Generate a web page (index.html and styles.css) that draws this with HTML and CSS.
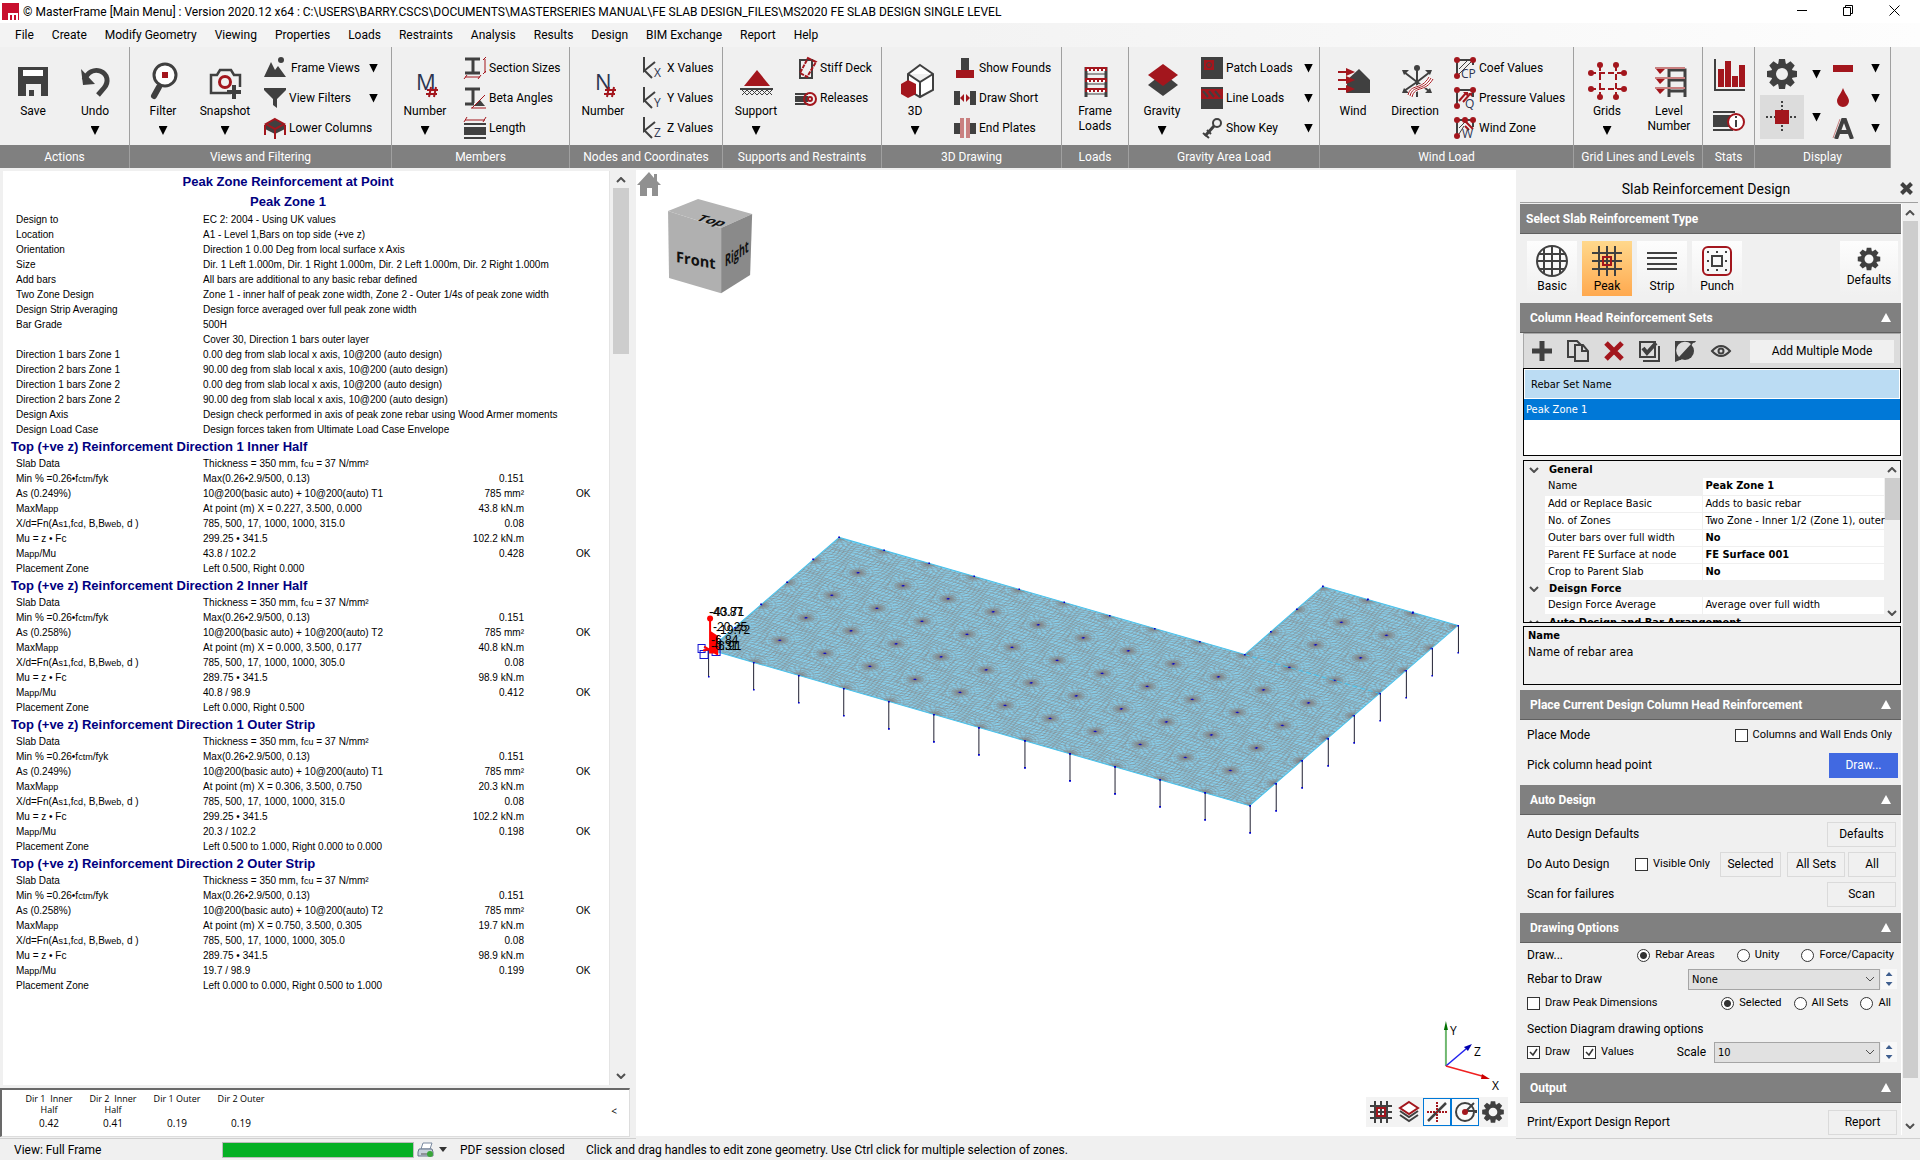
FILE: index.html
```
<!DOCTYPE html>
<html lang="en">
<head>
<meta charset="utf-8">
<title>MasterFrame [Main Menu]</title>
<link rel="stylesheet" href="styles.css">
</head>
<body>
<header class="titlebar">
  <svg class="logo" width="17" height="17" viewBox="0 0 17 17"><path fill="#c8102e" d="M0 0h17v17H0z"/><path fill="none" stroke="#fff" stroke-width="2" d="M7 17v-6h8v6M11 11v6"/></svg>
  <h1 class="title">© MasterFrame [Main Menu] : Version 2020.12 x64 : C:\USERS\BARRY.CSCS\DOCUMENTS\MASTERSERIES MANUAL\FE SLAB DESIGN_FILES\MS2020 FE SLAB DESIGN SINGLE LEVEL</h1>
  <div class="winbtns">
    <button aria-label="Minimize"><svg width="11" height="11"><path d="M0 5.500h10" stroke="#000"/></svg></button>
    <button aria-label="Restore"><svg width="11" height="11" fill="none" stroke="#000"><path d="M.5 2.500h7v8h-7zM2.500 2.500v-2h7v8h-2"/></svg></button>
    <button aria-label="Close"><svg width="11" height="11" stroke="#000"><path d="M.5.5l10 10M10.500.5l-10 10"/></svg></button>
  </div>
</header>
<nav class="menu">
  <button>File</button><button>Create</button><button>Modify Geometry</button><button>Viewing</button><button>Properties</button><button>Loads</button><button>Restraints</button><button>Analysis</button><button>Results</button><button>Design</button><button>BIM Exchange</button><button>Report</button><button>Help</button>
</nav>
<div class="ribbon">
  <section class="group">
    <div class="tools">
      <button class="big"><svg viewBox="0 0 40 36"><path fill="#404040" d="M5 4h30v29h-7V21H13v12H5z"/><path fill="#fff" d="M10 7h20v6H10z"/><path fill="#404040" d="M16 27h5v6h-5z"/></svg><span>Save</span></button>
      <button class="big"><svg viewBox="0 0 40 36"><path fill="none" stroke="#404040" stroke-width="5" d="M9 17c4-8 10-11 16-9 8 3 9 11 4 17l-6 7"/><path fill="#404040" d="M6 6l2 16 12-1z"/></svg><span>Undo</span><i class="tri"></i></button>
    </div>
    <h2>Actions</h2>
  </section>
  <section class="group">
    <div class="tools">
      <button class="big"><svg viewBox="0 0 40 36"><circle cx="22" cy="12" r="11" fill="#fff" stroke="#404040" stroke-width="3"/><path stroke="#404040" stroke-width="6" stroke-linecap="round" d="M16 24l-5 9"/><path fill="#a3161d" d="M19 9h6v6h-6z"/></svg><span>Filter</span><i class="tri"></i></button>
      <button class="big"><svg viewBox="0 0 40 36"><path fill="none" stroke="#404040" stroke-width="2.500" d="M26 30H6V12h6l3-5h11l3 5h6v12"/><circle cx="20" cy="19" r="5.500" fill="none" stroke="#a3161d" stroke-width="3"/><path fill="#404040" d="M27 22h4v5h5v4h-5v5h-4v-5h-5v-4h5z"/></svg><span>Snapshot</span><i class="tri"></i></button>
      <div class="smalls views">
        <button><svg viewBox="0 0 22 22"><path fill="#404040" d="M0 20L7 5l4 8 3-4 8 11z"/><circle cx="17" cy="3" r="3" fill="#404040"/></svg>Frame Views<i class="tri"></i></button>
        <button><svg viewBox="0 0 22 22"><path fill="#404040" d="M0 1h22v2l-9 9v9l-4-3v-6L0 3z"/></svg>View Filters<i class="tri"></i></button>
        <button><svg viewBox="0 0 22 22"><path fill="#404040" d="M1 7v5l10 5 10-5V7z"/><path fill="#404040" stroke="#a3161d" stroke-width="2" d="M11 2l9 5-9 5-9-5zM1 8v10M11 13v9M21 8v10"/></svg>Lower Columns</button>
      </div>
    </div>
    <h2>Views and Filtering</h2>
  </section>
  <section class="group">
    <div class="tools">
      <button class="big"><svg viewBox="0 0 40 36"><text class="glyph" x="11" y="27">M</text><path stroke="#a3161d" stroke-width="2" d="M26 24l-2 10M31 24l-2 10M22 27h11M21 31h11"/></svg><span>Number</span><i class="tri"></i></button>
      <div class="smalls">
        <button><svg viewBox="0 0 22 22"><path fill="none" stroke="#404040" stroke-width="3" d="M1 2h15M1 16h15M9 2v14"/><path fill="none" stroke="#a3161d" d="M21 2v14M19 3l3-3M19 17l3-3M1 20h15M0 22l3-4M14 22l3-4"/></svg>Section Sizes</button>
        <button><svg viewBox="0 0 22 22"><path fill="none" stroke="#404040" stroke-width="3" d="M1 2h15M1 17h9M9 2v14"/><path fill="#404040" d="M10 19h11l-5-6z"/><path fill="none" stroke="#a3161d" d="M7 21h15M8 21L21 8"/></svg>Beta Angles</button>
        <button><svg viewBox="0 0 22 22"><path fill="none" stroke="#a3161d" d="M1 3h20M0 5l3-5M19 5l3-5"/><path fill="#404040" d="M0 6h22v2H0zm0 4h22v8H0zm0 10h22v2H0z"/></svg>Length</button>
      </div>
    </div>
    <h2>Members</h2>
  </section>
  <section class="group">
    <div class="tools">
      <button class="big"><svg viewBox="0 0 40 36"><text class="glyph" x="12" y="27">N</text><path stroke="#a3161d" stroke-width="2" d="M26 24l-2 10M31 24l-2 10M22 27h11M21 31h11"/></svg><span>Number</span></button>
      <div class="smalls">
        <button><svg viewBox="0 0 22 22"><path fill="none" stroke="#404040" stroke-width="2" d="M2 0v14L13 5M2 13l8 8"/><text class="axis" x="12" y="20">X</text></svg>X Values</button>
        <button><svg viewBox="0 0 22 22"><path fill="none" stroke="#404040" stroke-width="2" d="M2 0v14L13 5M2 13l8 8"/><text class="axis" x="12" y="20">Y</text></svg>Y Values</button>
        <button><svg viewBox="0 0 22 22"><path fill="none" stroke="#404040" stroke-width="2" d="M2 0v14L13 5M2 13l8 8"/><text class="axis" x="12" y="20">Z</text></svg>Z Values</button>
      </div>
    </div>
    <h2>Nodes and Coordinates</h2>
  </section>
  <section class="group">
    <div class="tools">
      <button class="big"><svg viewBox="0 0 40 36"><path fill="#a3161d" d="M21 7l13 16H8z"/><path fill="none" stroke="#404040" stroke-width="2" d="M4 26h33"/><path fill="none" stroke="#404040" d="M6 27l5 5 5-5 5 5 5-5 5 5 5-5M6 32l5-5 5 5 5-5 5 5 5-5 5 5"/></svg><span>Support</span><i class="tri"></i></button>
      <div class="smalls">
        <button><svg viewBox="0 0 22 22"><path fill="none" stroke="#404040" stroke-width="2" d="M5 3h12v18H5z"/><path fill="none" stroke="#a3161d" stroke-width="2" stroke-dasharray="4 1" d="M13 1l8 4-9 15-7-4z"/></svg>Stiff Deck</button>
        <button><svg viewBox="0 0 22 22"><path fill="#404040" d="M0 6h13v2H0zm0 3h13v6H0zm0 7h13v2H0z"/><circle cx="15" cy="12" r="6" fill="none" stroke="#a3161d" stroke-width="2"/><circle cx="15" cy="12" r="2" fill="none" stroke="#a3161d" stroke-width="2"/></svg>Releases</button>
      </div>
    </div>
    <h2>Supports and Restraints</h2>
  </section>
  <section class="group">
    <div class="tools">
      <button class="big"><svg viewBox="0 0 40 36"><path fill="#fff" stroke="#404040" stroke-width="2" d="M25 2l13 9v16l-13 7-12-7V11zM13 11l12 8 13-8M25 19v15"/><path fill="#a3161d" d="M13 17l8 4v10l-8 4-7-4V21z"/></svg><span>3D</span><i class="tri"></i></button>
      <div class="smalls">
        <button><svg viewBox="0 0 22 22"><path fill="#404040" d="M7 1h8v13H7z"/><path fill="#a3161d" d="M2 13h18v8H2z"/></svg>Show Founds</button>
        <button><svg viewBox="0 0 22 22"><path fill="#404040" d="M0 4h6v14H0zm16 0h6v14h-6z"/><path fill="#a3161d" d="M10 7v8l-4-4zM12 7v8l4-4z"/></svg>Draw Short</button>
        <button><svg viewBox="0 0 22 22"><path fill="#404040" d="M0 6h6v11H0zm16 0h6v11h-6z"/><path fill="#c98080" d="M6 1h4v20H6zm6 0h4v20h-4z"/></svg>End Plates</button>
      </div>
    </div>
    <h2>3D Drawing</h2>
  </section>
  <section class="group">
    <div class="tools">
      <button class="big"><svg viewBox="0 0 40 36"><path fill="none" stroke="#404040" stroke-width="3" d="M11 4v30M31 4v30"/><path stroke="#404040" d="M10 11h22M10 21h22M10 31h22"/><path stroke="#a3161d" stroke-width="4" d="M10 6h22M10 17h22M10 27h22"/><path stroke="#fff" stroke-width="2" stroke-dasharray="2 2" d="M12 7h18M12 18h18M12 28h18"/></svg><span>Frame<br>Loads</span></button>
    </div>
    <h2>Loads</h2>
  </section>
  <section class="group">
    <div class="tools">
      <button class="big"><svg viewBox="0 0 40 36"><path fill="#404040" d="M21 10l15 12-15 11L6 22z"/><path fill="#a3161d" d="M21 1l15 11-15 11L6 12z"/></svg><span>Gravity</span><i class="tri"></i></button>
      <div class="smalls loads">
        <button><svg viewBox="0 0 22 22"><path fill="#404040" d="M0 0h22v22H0z"/><path fill="#a3161d" d="M3 3h10v10H3z"/><circle cx="8" cy="8" r="2.500" fill="none" stroke="#404040"/></svg>Patch Loads<i class="tri"></i></button>
        <button><svg viewBox="0 0 22 22"><path fill="#404040" d="M0 0h22v22H0z"/><path fill="#a3161d" d="M0 2h22v10H0z"/><path stroke="#404040" stroke-width="2" d="M2 4l5 6M8 4l5 6M14 4l5 6"/></svg>Line Loads<i class="tri"></i></button>
        <button><svg viewBox="0 0 22 22"><circle cx="16" cy="6" r="4" fill="none" stroke="#404040" stroke-width="2"/><path stroke="#404040" stroke-width="3" d="M13 9L4 19"/><path stroke="#404040" stroke-width="2" d="M2 16l6 5M6 13l4 4"/></svg>Show Key<i class="tri"></i></button>
      </div>
    </div>
    <h2>Gravity Area Load</h2>
  </section>
  <section class="group">
    <div class="tools">
      <button class="big"><svg viewBox="0 0 40 36"><path fill="#404040" d="M14 17L26 6l11 11v13H14z"/><path stroke="#a3161d" stroke-width="2" d="M5 9h9M5 17h9M5 26h9"/><path fill="#a3161d" d="M13 5l9 4-9 4zM13 13l9 4-9 4zM13 22l9 4-9 4z"/></svg><span>Wind</span></button>
      <button class="big"><svg viewBox="0 0 40 36"><path stroke="#404040" stroke-width="2" d="M22 5v29M22 19L9 9M22 19L35 9M22 19L9 28M22 19l12 9"/><circle cx="22" cy="5" r="3" fill="#404040"/><path fill="#404040" d="M7 7h7l-5 5zM37 7h-7l5 5zM7 30h7l-5-5zM37 30h-7l5-5z"/><path fill="none" stroke="#fff" stroke-width="6" d="M15 33c3-12 13-4 21-18"/><path fill="none" stroke="#a3161d" d="M13 32c3-12 13-4 21-18M15 33c3-12 13-4 21-18M17 34c3-12 13-4 21-18"/></svg><span>Direction</span><i class="tri"></i></button>
      <div class="smalls">
        <button><svg viewBox="0 0 22 22"><path fill="none" stroke="#404040" stroke-width="2" d="M3 19V3h16v5"/><path stroke="#404040" d="M5 12l8-8M5 17L17 5"/><g fill="#a3161d"><circle cx="3" cy="3" r="3"/><circle cx="19" cy="3" r="3"/><circle cx="3" cy="19" r="3"/></g><text class="axis" x="7" y="21">CP</text></svg>Coef Values</button>
        <button><svg viewBox="0 0 22 22"><path fill="none" stroke="#404040" stroke-width="2" d="M3 19V3h16v7"/><path stroke="#a3161d" stroke-width="2" d="M5 14l7-8M9 15l7-8"/><g fill="#a3161d"><path d="M9 5h5v5zM14 6h4v4z"/><circle cx="3" cy="3" r="3"/><circle cx="19" cy="3" r="3"/><circle cx="3" cy="19" r="3"/></g><text class="axis" x="11" y="21">Q</text></svg>Pressure Values</button>
        <button><svg viewBox="0 0 22 22"><path fill="none" stroke="#404040" stroke-width="2" d="M3 19V3h16v7"/><path stroke="#404040" d="M5 11l7-7M5 17L10 9"/><path stroke="#a3161d" stroke-width="2" d="M11 4l8 8M11 9l4 4"/><g fill="#a3161d"><circle cx="3" cy="3" r="3"/><circle cx="11" cy="3" r="3"/><circle cx="19" cy="3" r="3"/><circle cx="3" cy="19" r="3"/></g><text class="axis" x="8" y="21">W</text></svg>Wind Zone</button>
      </div>
    </div>
    <h2>Wind Load</h2>
  </section>
  <section class="group">
    <div class="tools">
      <button class="big"><svg viewBox="0 0 40 36"><path fill="none" stroke="#a3161d" stroke-width="2" stroke-dasharray="6 3" d="M13 2v32M29 2v32M3 10h36M3 26h36"/><g fill="#a3161d"><circle cx="13" cy="2" r="3"/><circle cx="29" cy="2" r="3"/><circle cx="13" cy="34" r="3"/><circle cx="29" cy="34" r="3"/><circle cx="4" cy="10" r="3"/><circle cx="4" cy="26" r="3"/><circle cx="37" cy="10" r="3"/><circle cx="37" cy="26" r="3"/></g></svg><span>Grids</span><i class="tri"></i></button>
      <button class="big"><svg viewBox="0 0 40 36"><path fill="none" stroke="#404040" stroke-width="3" d="M20 34V7h16v27M20 17h16M20 28h16"/><path stroke="#c98080" stroke-width="2" d="M6 5h30M6 15h30M6 25h30"/><path fill="#a3161d" d="M7 6h9l-5 5zM7 16h9l-5 5zM7 26h9l-5 5z"/></svg><span>Level<br>Number</span></button>
    </div>
    <h2>Grid Lines and Levels</h2>
  </section>
  <section class="group">
    <div class="tools stats">
      <button aria-label="Statistics"><svg width="32" height="32" viewBox="0 0 32 32"><path fill="none" stroke="#404040" stroke-width="2" d="M2 0v31h30"/><path fill="#a3161d" d="M5 10h6v18H5zM12 2h6v26h-6zM19 17h6v11h-6zM26 6h6v22h-6z"/></svg></button>
      <button aria-label="Member info"><svg width="32" height="22" viewBox="0 0 32 22"><path fill="#404040" d="M0 1h22v2H0zm0 4h20v12H0zm0 14h20v2H0z"/><circle cx="23" cy="12" r="8" fill="#fff" stroke="#a3161d" stroke-width="2"/><path stroke="#404040" stroke-width="2" d="M23 6v2M23 10v7"/></svg></button>
    </div>
    <h2>Stats</h2>
  </section>
  <section class="group">
    <div class="tools display">
      <div class="pair">
        <button aria-label="Settings"><svg width="32" height="32" viewBox="-16 -16 32 32"><use href="#gear"/></svg></button><i class="tri"></i>
        <button class="cross" aria-label="Cursor"><svg width="36" height="36" viewBox="0 0 36 36"><path stroke="#404040" stroke-width="2" stroke-dasharray="2 2" d="M18 2v32M2 18h32"/><path fill="#a3161d" d="M11 11h14v14H11z"/></svg></button><i class="tri"></i>
      </div>
      <div class="trio">
        <button aria-label="Line colour"><svg width="22" height="22" viewBox="0 0 22 22"><path fill="#a3161d" d="M1 8h20v7H1z"/></svg><i class="tri"></i></button>
        <button aria-label="Fill colour"><svg width="22" height="22" viewBox="0 0 22 22"><path fill="#a3161d" d="M11 1c2 6 6 9 6 13a6 6 0 0 1-12 0c0-4 4-7 6-13z"/></svg><i class="tri"></i></button>
        <button aria-label="Font"><svg width="22" height="22" viewBox="0 0 22 22"><path fill="none" stroke="#404040" stroke-width="4" d="M4 22L11 3h2l7 19M7 15h11"/><path stroke="#c98080" d="M1 21L8 2"/></svg><i class="tri"></i></button>
      </div>
    </div>
    <h2>Display</h2>
  </section>
</div>

<main class="main">
  <div class="left">
    <div class="reportbox">
      <article class="report">
        <h3 class="head">Peak Zone Reinforcement at Point</h3>
        <h3 class="head">Peak Zone 1</h3>
        <table>
          <colgroup><col class="c-name"><col><col class="c-num"><col class="c-ok"></colgroup>
          <tr><td>Design to</td><td colspan="3">EC 2: 2004 - Using UK values</td></tr>
          <tr><td>Location</td><td colspan="3">A1 - Level 1,Bars on top side (+ve z)</td></tr>
          <tr><td>Orientation</td><td colspan="3">Direction 1 0.00 Deg from local surface x Axis</td></tr>
          <tr><td>Size</td><td colspan="3">Dir. 1 Left 1.000m, Dir. 1 Right 1.000m, Dir. 2 Left 1.000m, Dir. 2 Right 1.000m</td></tr>
          <tr><td>Add bars</td><td colspan="3">All bars are additional to any basic rebar defined</td></tr>
          <tr><td>Two Zone Design</td><td colspan="3">Zone 1 - inner half of peak zone width, Zone 2 - Outer 1/4s of peak zone width</td></tr>
          <tr><td>Design Strip Averaging</td><td colspan="3">Design force averaged over full peak zone width</td></tr>
          <tr><td>Bar Grade</td><td colspan="3">500H</td></tr>
          <tr><td></td><td colspan="3">Cover 30, Direction 1 bars outer layer</td></tr>
          <tr><td>Direction 1 bars Zone 1</td><td colspan="3">0.00 deg from slab local x axis, 10@200 (auto design)</td></tr>
          <tr><td>Direction 2 bars Zone 1</td><td colspan="3">90.00 deg from slab local x axis, 10@200 (auto design)</td></tr>
          <tr><td>Direction 1 bars Zone 2</td><td colspan="3">0.00 deg from slab local x axis, 10@200 (auto design)</td></tr>
          <tr><td>Direction 2 bars Zone 2</td><td colspan="3">90.00 deg from slab local x axis, 10@200 (auto design)</td></tr>
          <tr><td>Design Axis</td><td colspan="3">Design check performed in axis of peak zone rebar using Wood Armer moments</td></tr>
          <tr><td>Design Load Case</td><td colspan="3">Design forces taken from Ultimate Load Case Envelope</td></tr>
          <tr class="sec"><th colspan="4">Top (+ve z) Reinforcement Direction 1 Inner Half</th></tr>
          <tr><td>Slab Data</td><td>Thickness = 350 mm, f<small>cu</small> = 37 N/mm²</td><td></td><td></td></tr>
          <tr><td>Min % =0.26•f<small>ctm</small>/fyk</td><td>Max(0.26•2.9/500, 0.13)</td><td>0.151</td><td></td></tr>
          <tr><td>As (0.249%)</td><td>10@200(basic auto) + 10@200(auto) T1</td><td>785 mm²</td><td>OK</td></tr>
          <tr><td>MaxM<small>app</small></td><td>At point (m) X = 0.227, 3.500, 0.000</td><td>43.8 kN.m</td><td></td></tr>
          <tr><td>X/d=Fn(A<small>s1</small>,f<small>cd</small>, B,B<small>web</small>, d )</td><td>785, 500, 17, 1000, 1000, 315.0</td><td>0.08</td><td></td></tr>
          <tr><td>Mu = z • Fc</td><td>299.25 • 341.5</td><td>102.2 kN.m</td><td></td></tr>
          <tr><td>M<small>app</small>/Mu</td><td>43.8 / 102.2</td><td>0.428</td><td>OK</td></tr>
          <tr><td>Placement Zone</td><td>Left 0.500, Right 0.000</td><td></td><td></td></tr>
          <tr class="sec"><th colspan="4">Top (+ve z) Reinforcement Direction 2 Inner Half</th></tr>
          <tr><td>Slab Data</td><td>Thickness = 350 mm, f<small>cu</small> = 37 N/mm²</td><td></td><td></td></tr>
          <tr><td>Min % =0.26•f<small>ctm</small>/fyk</td><td>Max(0.26•2.9/500, 0.13)</td><td>0.151</td><td></td></tr>
          <tr><td>As (0.258%)</td><td>10@200(basic auto) + 10@200(auto) T2</td><td>785 mm²</td><td>OK</td></tr>
          <tr><td>MaxM<small>app</small></td><td>At point (m) X = 0.000, 3.500, 0.177</td><td>40.8 kN.m</td><td></td></tr>
          <tr><td>X/d=Fn(A<small>s1</small>,f<small>cd</small>, B,B<small>web</small>, d )</td><td>785, 500, 17, 1000, 1000, 305.0</td><td>0.08</td><td></td></tr>
          <tr><td>Mu = z • Fc</td><td>289.75 • 341.5</td><td>98.9 kN.m</td><td></td></tr>
          <tr><td>M<small>app</small>/Mu</td><td>40.8 / 98.9</td><td>0.412</td><td>OK</td></tr>
          <tr><td>Placement Zone</td><td>Left 0.000, Right 0.500</td><td></td><td></td></tr>
          <tr class="sec"><th colspan="4">Top (+ve z) Reinforcement Direction 1 Outer Strip</th></tr>
          <tr><td>Slab Data</td><td>Thickness = 350 mm, f<small>cu</small> = 37 N/mm²</td><td></td><td></td></tr>
          <tr><td>Min % =0.26•f<small>ctm</small>/fyk</td><td>Max(0.26•2.9/500, 0.13)</td><td>0.151</td><td></td></tr>
          <tr><td>As (0.249%)</td><td>10@200(basic auto) + 10@200(auto) T1</td><td>785 mm²</td><td>OK</td></tr>
          <tr><td>MaxM<small>app</small></td><td>At point (m) X = 0.306, 3.500, 0.750</td><td>20.3 kN.m</td><td></td></tr>
          <tr><td>X/d=Fn(A<small>s1</small>,f<small>cd</small>, B,B<small>web</small>, d )</td><td>785, 500, 17, 1000, 1000, 315.0</td><td>0.08</td><td></td></tr>
          <tr><td>Mu = z • Fc</td><td>299.25 • 341.5</td><td>102.2 kN.m</td><td></td></tr>
          <tr><td>M<small>app</small>/Mu</td><td>20.3 / 102.2</td><td>0.198</td><td>OK</td></tr>
          <tr><td>Placement Zone</td><td>Left 0.500 to 1.000, Right 0.000 to 0.000</td><td></td><td></td></tr>
          <tr class="sec"><th colspan="4">Top (+ve z) Reinforcement Direction 2 Outer Strip</th></tr>
          <tr><td>Slab Data</td><td>Thickness = 350 mm, f<small>cu</small> = 37 N/mm²</td><td></td><td></td></tr>
          <tr><td>Min % =0.26•f<small>ctm</small>/fyk</td><td>Max(0.26•2.9/500, 0.13)</td><td>0.151</td><td></td></tr>
          <tr><td>As (0.258%)</td><td>10@200(basic auto) + 10@200(auto) T2</td><td>785 mm²</td><td>OK</td></tr>
          <tr><td>MaxM<small>app</small></td><td>At point (m) X = 0.750, 3.500, 0.305</td><td>19.7 kN.m</td><td></td></tr>
          <tr><td>X/d=Fn(A<small>s1</small>,f<small>cd</small>, B,B<small>web</small>, d )</td><td>785, 500, 17, 1000, 1000, 305.0</td><td>0.08</td><td></td></tr>
          <tr><td>Mu = z • Fc</td><td>289.75 • 341.5</td><td>98.9 kN.m</td><td></td></tr>
          <tr><td>M<small>app</small>/Mu</td><td>19.7 / 98.9</td><td>0.199</td><td>OK</td></tr>
          <tr><td>Placement Zone</td><td>Left 0.000 to 0.000, Right 0.500 to 1.000</td><td></td><td></td></tr>
        </table>
      </article>
      <div class="scroll">
        <svg class="chev" viewBox="0 0 10 6"><path d="M1 5l4-4 4 4"/></svg>
        <div class="thumb short"></div>
        <svg class="chev" viewBox="0 0 10 6"><path d="M1 1l4 4 4-4"/></svg>
      </div>
    </div>
    <div class="summary">
      <table>
        <tr><th>Dir 1&nbsp; Inner Half</th><th>Dir 2&nbsp; Inner Half</th><th>Dir 1 Outer</th><th>Dir 2 Outer</th></tr>
        <tr><td>0.42</td><td>0.41</td><td>0.19</td><td>0.19</td></tr>
      </table>
      <button>&lt;</button>
    </div>
  </div>

  <div class="view">
    <svg class="scene" viewBox="637 170 879 965">
      <defs>
        <g id="gear"><circle r="8.500" fill="none" stroke="#404040" stroke-width="5"/><g fill="#404040"><path id="tooth" d="M-3-15h6l1 6h-8z"/><use href="#tooth" transform="rotate(45)"/><use href="#tooth" transform="rotate(90)"/><use href="#tooth" transform="rotate(135)"/><use href="#tooth" transform="rotate(180)"/><use href="#tooth" transform="rotate(225)"/><use href="#tooth" transform="rotate(270)"/><use href="#tooth" transform="rotate(315)"/></g></g>
        <radialGradient id="shade"><stop offset="0" stop-color="#666" stop-opacity=".95"/><stop offset=".3" stop-color="#777" stop-opacity=".65"/><stop offset="1" stop-color="#888" stop-opacity="0"/></radialGradient>
        <g id="fan" fill="none" stroke="#858585" stroke-width="1.500">
          <circle r="20" stroke="none" fill="url(#shade)"/>
          <circle r="7"/><circle r="11"/><circle r="16"/><circle r="22"/><circle r="29"/>
          <path d="M0-30V30M-30 0H30M-21-21L21 21M-21 21L21-21M-28-11L28 11M-28 11L28-11M-11-28L11 28M-11 28L11-28"/>
          <circle r="3" stroke="none" fill="#00c"/>
        </g>
        <pattern id="mesh" width="100" height="100" patternUnits="userSpaceOnUse" patternTransform="matrix(.45 .13 .26 -.225 709.700 649.300)">
          <path fill="#87ceeb" d="M0 0h100v100H0z"/>
          <g fill="none" stroke="#858585" stroke-width="1.700">
            <path d="M30 0Q35 4 50 4T70 0M29 8Q36 12 50 12T71 8M26 16Q38 24 50 20T74 16M21 24Q36 33 50 28T79 24M0 30Q28 41 50 36T100 30M0 40Q28 49 50 44T100 40M0 50Q22 57 50 51T100 50M0 60Q28 55 50 60T100 60M0 70Q28 60 50 68T100 70M21 77Q36 70 50 76T79 77M26 85Q38 78 50 84T74 85M29 93Q36 89 50 92T71 93"/>
            <path d="M0 30Q4 35 4 50T0 70M8 29Q12 36 12 50T8 71M16 26Q24 38 20 50T16 74M24 21Q33 36 28 50T24 79M30 0Q41 28 36 50T30 100M40 0Q49 28 44 50T40 100M50 0Q57 24 51 50T50 100M60 0Q55 28 60 50T60 100M70 0Q60 28 68 50T70 100M77 21Q70 36 76 50T77 79M85 26Q78 38 84 50T85 74M93 29Q89 36 92 50T93 71"/>
          </g>
          <use href="#fan"/><use href="#fan" x="100"/><use href="#fan" y="100"/><use href="#fan" x="100" y="100"/>
        </pattern>
        <marker id="dot" markerWidth="2" markerHeight="2" refX="1" refY="1" markerUnits="userSpaceOnUse"><path fill="#0000c8" d="M0 0h2v2H0z"/></marker>
      </defs>
      <g class="cube" stroke-linejoin="round">
        <path fill="#b4b4b4" d="M669 211l30-12 54 15-31 14z"/>
        <path fill="#b0b0b0" d="M669 211l53 17v65l-52-15z"/>
        <path fill="#8a8a8a" d="M722 228l31-14-2 61-29 18z"/>
        <text transform="matrix(.96 .24 -.7 .5 696 220)">Top</text>
        <text transform="matrix(.97 .17 0 1 677 262)">Front</text>
        <text transform="matrix(.6 -.4 0 1.100 726 267)">Right</text>
      </g>
      <path fill="url(#mesh)" d="M710 649l130-112 405 117 78-68 135 39-208 180z"/>
      <path fill="none" stroke="#46c3ee" d="M710 649l130-112 405 117 78-68 135 39-208 180z"/>
      <path fill="none" stroke="#46c3ee" stroke-dasharray="5 3" d="M1245 654l135 39"/>
      <path fill="none" stroke="#223" marker-start="url(#dot)" marker-mid="url(#dot)" marker-end="url(#dot)" d="M709.500 649v27M754.500 662v27M799.500 675v27M844.500 688v27M889.500 701v27M934.500 714v27M979.500 727v27M1025.500 740v27M1070.500 753v27M1115.500 766v27M1160.500 779v27M1205.500 792v27M1250.500 805v27M1276.500 783v27M1302.500 760v27M1328.500 738v27M1354.500 715v27M1380.500 693v27M1406.500 670v27M1432.500 648v27M1458.500 625v27"/>
      <path fill="none" stroke="none" marker-start="url(#dot)" marker-mid="url(#dot)" marker-end="url(#dot)" d="M736 627L762 604L788 582L814 559L840 537L885 550L930 563L975 576L1020 589L1065 602L1110 615L1155 628L1200 641L1245 654L1271 631L1297 609L1323 586L1368 599L1413 612"/>
      <path fill="none" stroke="#1414d2" d="M699 644h7v8h-7zM701 650h8v8h-8zM713 641h8v8h-8zM713 647h8v8h-8z"/>
      <path fill="red" stroke="red" stroke-width="2" d="M711 617v35M712 632l6 4v16h-7zM704 650l16-3M705 646l14 8"/>
      <circle cx="711" cy="618" r="3" fill="red"/>
      <g class="vals"><text x="710" y="616">-40.87</text><text x="711" y="616">-43.71</text><text x="714" y="630">-20.25</text><text x="717" y="633">-19.72</text><text x="712" y="643">-6.84</text><text x="715" y="649">-6.91</text><text x="712" y="649">-0.31</text></g>
      <path fill="none" stroke="#70b870" stroke-width="2" d="M1446 1065v-38"/><path fill="#007000" d="M1444 1029l2-9 2 9z"/>
      <path fill="none" stroke="#22e" stroke-width="1.500" d="M1446 1065l20-17"/><path fill="#0000b0" d="M1464 1046l8-3-4 7z"/>
      <path fill="none" stroke="#f02020" stroke-width="1.500" d="M1446 1065l36 10"/><path fill="#c00" d="M1482 1073l8 5-9 0z"/>
      <g class="tag"><text x="1450" y="1034">Y</text><text x="1474" y="1055">Z</text><text x="1492" y="1089">X</text></g>
    </svg>
    <button class="home" aria-label="Home view"><svg width="24" height="26" viewBox="0 0 24 26"><path fill="#909090" d="M12 1L0 14h3v11h7v-8h5v8h6V14h3l-4-4V3h-3v4z"/></svg></button>
    <div class="viewbar">
      <button aria-label="Mesh"><svg viewBox="0 0 26 26"><path stroke="#404040" stroke-width="2" d="M7 2v22M13 2v22M19 2v22M2 7h22M2 13h22M2 19h22"/><path fill="none" stroke="#a3161d" stroke-width="2" d="M9 9h8v8H9z"/></svg></button>
      <button aria-label="Layers"><svg viewBox="0 0 26 26"><path fill="none" stroke="#404040" stroke-width="2" d="M4 12l9 6 9-6M4 16l9 6 9-6"/><path fill="#fff" stroke="#a3161d" stroke-width="2" d="M13 3l9 6-9 6-9-6z"/></svg></button>
      <button class="on" aria-label="Snap"><svg viewBox="0 0 26 26"><path stroke="#404040" stroke-width="2.500" d="M4 22L22 4"/><path stroke="#a3161d" stroke-width="2" stroke-dasharray="2 1" d="M13 3v20M3 13h20"/></svg></button>
      <button class="on" aria-label="Angle"><svg viewBox="0 0 26 26"><circle cx="13" cy="13" r="9" fill="none" stroke="#404040" stroke-width="2"/><path fill="none" stroke="#404040" stroke-width="2" d="M13 13l9-9M13 12h11v2"/><circle cx="13" cy="13" r="3" fill="#a3161d"/></svg></button>
      <button aria-label="View settings"><svg viewBox="-18 -18 36 36"><use href="#gear"/></svg></button>
    </div>
  </div>

  <aside class="panel">
    <div class="ptitle"><h2>Slab Reinforcement Design</h2><button aria-label="Close panel"><svg width="13" height="13"><path stroke="#404040" stroke-width="4" d="M1.500 1.500l10 10M11.500 1.500l-10 10"/></svg></button></div>
    <div class="pbody">
      <div class="pcontent">
        <h3 class="bar first">Select Slab Reinforcement Type</h3>
        <div class="types">
          <button><svg viewBox="0 0 34 34"><g fill="none" stroke="#404040" stroke-width="2"><circle cx="17" cy="17" r="15"/><path d="M9 5v24M17 2v30M25 5v24M4 10h26M2 17h30M4 25h26"/></g></svg>Basic</button>
          <button class="active"><svg viewBox="0 0 34 34"><path stroke="#404040" stroke-width="2" d="M9 2v30M17 2v30M25 2v30M2 9h30M2 17h30M2 25h30"/><path fill="none" stroke="#a3161d" stroke-width="2" d="M13 13h8v8h-8z"/></svg>Peak</button>
          <button><svg viewBox="0 0 34 34"><path stroke="#404040" stroke-width="2" d="M2 9h30M2 14h30M2 20h30M2 25h30"/></svg>Strip</button>
          <button><svg viewBox="0 0 34 34"><rect x="3" y="3" width="28" height="28" rx="5" fill="none" stroke="#a3161d" stroke-width="2"/><path fill="none" stroke="#404040" stroke-width="2" d="M12 12h10v10H12z"/><path stroke="#404040" stroke-width="2" stroke-dasharray="2 7" d="M7 8h22M7 26h22M7 17h2M25 17h2"/></svg>Punch</button>
          <button class="dflt"><svg viewBox="-20 -20 40 40"><use href="#gear"/></svg>Defaults</button>
        </div>
        <h3 class="bar">Column Head Reinforcement Sets<i class="up"></i></h3>
        <div class="setbar">
          <button aria-label="Add"><svg viewBox="0 0 24 24"><path stroke="#404040" stroke-width="5" d="M12 2v20M2 12h20"/></svg></button>
          <button aria-label="Copy"><svg viewBox="0 0 24 24"><path fill="none" stroke="#404040" stroke-width="2" d="M9 18H2V2h9l4 4M9 6h8l5 6v10H9zM16 6v6h6"/></svg></button>
          <button aria-label="Delete"><svg viewBox="0 0 24 24"><path stroke="#a3161d" stroke-width="5" d="M4 4l16 16M20 4L4 20"/></svg></button>
          <button aria-label="Select all"><svg viewBox="0 0 24 24"><path fill="none" stroke="#404040" stroke-width="2" d="M3 3h15v15H3zM6 22h16V7"/><path fill="none" stroke="#404040" stroke-width="4" d="M6 9l4 5 9-10"/></svg></button>
          <button aria-label="Invert"><svg viewBox="0 0 24 24"><path fill="#404040" d="M2 2h21l-3 5v14H7l-5 2z"/><path fill="#dcdcdc" d="M20 4l4-1v20H4l4-2z"/><circle cx="12" cy="12" r="9" fill="#404040"/><path fill="#dcdcdc" d="M18 5A8 8 0 0 0 6 18z"/></svg></button>
          <button aria-label="Show"><svg viewBox="0 0 24 24"><path fill="none" stroke="#404040" stroke-width="2" d="M3 12q9-10 18 0-9 10-18 0z"/><circle cx="12" cy="12" r="2.500" fill="none" stroke="#404040" stroke-width="2"/></svg></button>
          <button class="multi">Add Multiple Mode</button>
        </div>
        <table class="sets"><tr><th>Rebar Set Name</th></tr><tr><td>Peak Zone 1</td></tr><tr class="rest"><td></td></tr></table>
        <div class="props">
          <table>
            <colgroup><col class="c-fold"><col class="c-prop"><col></colgroup>
            <tr class="cat"><th><svg class="chev" viewBox="0 0 10 6"><path d="M1 1l4 4 4-4"/></svg></th><th colspan="2">General</th></tr>
            <tr class="sel"><th></th><td>Name</td><td><b>Peak Zone 1</b></td></tr>
            <tr><th></th><td>Add or Replace Basic</td><td>Adds to basic rebar</td></tr>
            <tr><th></th><td>No. of Zones</td><td>Two Zone - Inner 1/2 (Zone 1), outer</td></tr>
            <tr><th></th><td>Outer bars over full width</td><td><b>No</b></td></tr>
            <tr><th></th><td>Parent FE Surface at node</td><td><b>FE Surface 001</b></td></tr>
            <tr><th></th><td>Crop to Parent Slab</td><td><b>No</b></td></tr>
            <tr class="cat"><th><svg class="chev" viewBox="0 0 10 6"><path d="M1 1l4 4 4-4"/></svg></th><th colspan="2">Deisgn Force</th></tr>
            <tr><th></th><td>Design Force Average</td><td>Average over full width</td></tr>
            <tr class="cat"><th><svg class="chev" viewBox="0 0 10 6"><path d="M1 1l4 4 4-4"/></svg></th><th colspan="2">Auto Design and Bar Arrangement</th></tr>
          </table>
          <div class="scroll">
            <svg class="chev" viewBox="0 0 10 6"><path d="M1 5l4-4 4 4"/></svg>
            <div class="thumb mini"></div>
            <svg class="chev" viewBox="0 0 10 6"><path d="M1 1l4 4 4-4"/></svg>
          </div>
        </div>
        <div class="desc"><b>Name</b><p>Name of rebar area</p></div>
        <h3 class="bar">Place Current Design Column Head Reinforcement<i class="up"></i></h3>
        <div class="rows place">
          <div class="row"><span>Place Mode</span><label class="push endonly"><input type="checkbox">Columns and Wall Ends Only</label></div>
          <div class="row"><span>Pick column head point</span><button class="btn primary push">Draw...</button></div>
        </div>
        <h3 class="bar">Auto Design<i class="up"></i></h3>
        <div class="rows auto">
          <div class="row"><span>Auto Design Defaults</span><button class="btn push">Defaults</button></div>
          <div class="row"><span class="doauto">Do Auto Design</span><label><input type="checkbox">Visible Only</label><button class="btn w61 push">Selected</button><button class="btn w58">All Sets</button><button class="btn w48">All</button></div>
          <div class="row"><span>Scan for failures</span><button class="btn push">Scan</button></div>
        </div>
        <h3 class="bar">Drawing Options<i class="up"></i></h3>
        <div class="rows draw">
          <div class="row r24"><span>Draw...</span><span class="radios wide push"><label><input type="radio" name="what" checked>Rebar Areas</label><label><input type="radio" name="what">Unity</label><label><input type="radio" name="what">Force/Capacity</label></span></div>
          <div class="row r24"><label for="rb" class="lbl">Rebar to Draw</label><select id="rb" class="sel192 push"><option>None</option></select><span class="spin"><i class="sup"></i><i class="sdn"></i></span></div>
          <div class="row r24"><label><input type="checkbox">Draw Peak Dimensions</label><span class="radios push"><label><input type="radio" name="which" checked>Selected</label><label><input type="radio" name="which">All Sets</label><label><input type="radio" name="which">All</label></span></div>
          <div class="row r28"><span>Section Diagram drawing options</span></div>
          <div class="row r16"><label><input type="checkbox" checked>Draw</label><label class="vals2"><input type="checkbox" checked>Values</label><label for="sc" class="lbl push">Scale</label><select id="sc" class="sel166"><option>10</option></select><span class="spin"><i class="sup"></i><i class="sdn"></i></span></div>
        </div>
        <h3 class="bar">Output<i class="up"></i></h3>
        <div class="rows out"><div class="row"><span>Print/Export Design Report</span><button class="btn push">Report</button></div></div>
      </div>
      <div class="scroll">
        <svg class="chev" viewBox="0 0 10 6"><path d="M1 5l4-4 4 4"/></svg>
        <div class="thumb long"></div>
        <svg class="chev" viewBox="0 0 10 6"><path d="M1 1l4 4 4-4"/></svg>
      </div>
    </div>
  </aside>
</main>

<footer class="status">
  <span class="full">View: Full Frame</span>
  <div class="progress"></div>
  <button class="print" aria-label="Print"><svg width="18" height="16" viewBox="0 0 18 16"><path fill="#fff" stroke="#7a8aa0" d="M6 1h9l-2 6H4z"/><path fill="#c9d2dc" stroke="#66758a" d="M2 7h13l1 3v4H1v-4z"/><path stroke="#555" d="M4 12h7"/><circle cx="13" cy="12" r="3" fill="#3aa63a"/></svg><i class="tri small"></i></button>
  <span class="pdf">PDF session closed</span>
  <span>Click and drag handles to edit zone geometry. Use Ctrl click for multiple selection of zones.</span>
</footer>
</body>
</html>
```
FILE: styles.css
```
* { box-sizing: border-box; }
body { margin: 0; height: 100vh; display: flex; flex-direction: column; overflow: hidden; background: #f0f0f0; color: #000; font: 12px/16px Roboto, "Open Sans", sans-serif; }
h1, h2, h3, p { margin: 0; font-size: 12px; font-weight: 400; }
button { margin: 0; padding: 0; border: 0; background: none; color: inherit; font: inherit; }
svg { display: block; flex: none; }
table { border-collapse: collapse; border-spacing: 0; }
td, th { padding: 0; text-align: left; font-weight: 400; }

.titlebar { display: flex; align-items: center; height: 23px; padding: 0 20px 0 2px; background: #fff; }
.logo { margin-right: 4px; }
.title { white-space: nowrap; }
.winbtns { display: flex; gap: 35px; margin-left: auto; padding-bottom: 2px; }
.menu { display: flex; gap: 18px; height: 24px; padding-left: 15px; background: linear-gradient(90deg, #f3f3f3 50%, #fdfdfd); }

/* Ribbon */
.ribbon { display: grid; grid-template-columns: 130fr 262fr 178fr 153fr 159fr 180fr 67fr 191fr 254fr 129fr 52fr 136fr; height: 121px; padding-right: 29px; flex: none; }
.group { display: flex; flex-direction: column; min-width: 0; border-right: 1px solid #a0a0a0; }
.group h2 { height: 23px; line-height: 24px; background: #808080; color: #fff; text-align: center; white-space: nowrap; }
.tools { display: flex; flex: 1; padding: 0 2px; white-space: nowrap; }
.big { display: flex; flex-direction: column; align-items: center; flex: none; width: 62px; padding-top: 16px; line-height: 15px; }
.big svg { width: 40px; height: 36px; margin-bottom: 5px; overflow: visible; }
.tri { flex: none; width: 9px; height: 9px; background: #000; clip-path: polygon(0 0, 100% 0, 50% 100%); }
.big .tri { margin-top: 7px; }
.tri.small { width: 8px; height: 5px; background: #333; }
.glyph { font: 22px "Open Sans", sans-serif; fill: #2c3550; }
.axis { font: 12px "Open Sans", sans-serif; fill: #2c3550; }
.smalls { display: flex; flex-direction: column; padding: 6px 0 0 8px; }
.smalls button { display: flex; align-items: center; gap: 3px; height: 30px; }
.smalls svg { width: 22px; height: 22px; overflow: visible; }
.views, .loads { flex: 1; }
.views button:nth-child(1) { gap: 5px; }
.smalls .tri { margin-left: auto; }
.views .tri { margin-right: 11px; }
.loads .tri { margin-right: 4px; }
.stats { flex-direction: column; align-items: center; gap: 19px; padding-top: 12px; }
.display { justify-content: space-between; padding: 6px 10px 0 5px; }
.pair { display: grid; grid-template-columns: 44px 9px; column-gap: 8px; grid-template-rows: 42px 44px; align-items: center; }
.pair button { display: grid; place-items: center; }
.pair .cross { height: 44px; background: #dcdcdc; }
.trio button { display: flex; align-items: center; gap: 17px; height: 30px; }

.main { display: grid; grid-template-columns: 636px minmax(0, 1fr) 404px; flex: 1; min-height: 0; padding-top: 2px; }

/* Report */
.left { display: flex; flex-direction: column; min-height: 0; }
.reportbox { display: flex; flex: 1; min-height: 0; padding: 1px 7px 0 3px; gap: 3px; }
.report { flex: 1; padding: 1px 0 0 8px; background: #fff; border-right: 1px solid #e4e4e4; font: 10px/15px "Liberation Sans", Arial, sans-serif; overflow: hidden; white-space: nowrap; }
.report .head { height: 20px; margin: 0 44px 0 0; font: bold 13px/20px "Liberation Sans", Arial, sans-serif; color: #000080; text-align: center; }
.report table { width: 100%; table-layout: fixed; }
.c-name { width: 192px; }
.c-num { width: 100px; }
.c-ok { width: 85px; }
.report td { height: 15px; }
.report td:first-child { padding-left: 5px; }
.report td:nth-child(3) { text-align: right; }
.report td:nth-child(4) { padding-left: 52px; }
.report small { font-size: 9px; line-height: 0; }
.sec th { height: 19px; font: bold 13px/18px "Liberation Sans", Arial, sans-serif; color: #000080; }
.scroll { display: flex; flex-direction: column; align-items: center; flex: none; width: 16px; padding: 6px 0; gap: 5px; }
.scroll .chev:last-child { margin-top: auto; }
.chev { width: 10px; height: 6px; fill: none; stroke: #505050; stroke-width: 2; }
.thumb { width: 16px; background: #cdcdcd; flex: none; }
.short { height: 166px; }
.summary { display: flex; justify-content: space-between; align-items: center; height: 49px; margin: 3px 6px 2px 0; padding: 0 12px 4px 15px; background: #fff; border: 1px solid #ddd; border-top: 2px solid #696969; border-left: 2px solid #696969; font: 10px/11px "Open Sans", sans-serif; }
.summary th, .summary td { width: 64px; padding: 0 8px; text-align: center; vertical-align: top; }
.summary th { height: 25px; padding: 0; font-size: 9px; }
.summary th:nth-child(-n+2) { padding: 0 6px; }

/* 3D view */
.view { position: relative; min-width: 0; background: #fff; border-bottom: 3px solid #f0f0f0; }
.scene { width: 100%; height: 100%; }
.cube text { font: bold 15px "Open Sans", sans-serif; fill: #111; }
.vals { font: 12px "Liberation Sans", Arial, sans-serif; }
.tag { font: 12px "Open Sans", sans-serif; }
.home { position: absolute; left: 1px; top: 1px; }
.viewbar { position: absolute; right: 8px; bottom: 9px; display: flex; padding: 1px; background: #f3f3f3; }
.viewbar button { display: grid; place-items: center; width: 28px; height: 28px; }
.viewbar svg { width: 26px; height: 26px; }
.viewbar .on { border: 1px solid #0078d7; background: #fafafa; }

/* Design panel */
.panel { display: flex; flex-direction: column; min-height: 0; padding: 0 2px 4px 4px; }
.ptitle { display: flex; align-items: center; height: 33px; padding: 5px 5px 0 0; border-bottom: 1px solid #a0a0a0; }
.ptitle h2 { flex: 1; padding-right: 8px; font-size: 14px; text-align: center; }
.pbody { display: flex; flex: 1; min-height: 0; margin-top: 1px; }
.pcontent { flex: 1; min-width: 0; overflow: hidden; background: #f0f0f0; border-right: 1px solid #fff; }
.bar { display: flex; align-items: center; justify-content: space-between; height: 30px; padding: 0 10px; background: #808080; border-bottom: 1px solid #606060; color: #fff; font-weight: 700; }
.bar.first { padding-left: 6px; }
.up { width: 10px; height: 9px; background: #fff; clip-path: polygon(0 100%, 100% 100%, 50% 0); }
.types { display: flex; gap: 5px; padding: 7px 3px 7px 7px; }
.types button { display: flex; flex-direction: column; align-items: center; width: 50px; height: 55px; padding-top: 3px; background: linear-gradient(#fdfdfd, #f0f0f0); line-height: 12px; }
.types svg { width: 34px; height: 34px; margin-bottom: 2px; }
.types .active { background: linear-gradient(#ffd88c, #ffa94f); }
.types .dflt { width: 58px; margin-left: auto; }
.types .dflt svg { height: 30px; margin-bottom: 0; }
.setbar { display: flex; align-items: center; justify-content: space-between; height: 35px; margin-left: 3px; padding: 0 6px; background: #dcdcdc; border: 1px solid #a8a8a8; border-bottom: 0; }
.setbar svg { width: 24px; height: 24px; }
.setbar .multi { width: 144px; height: 23px; margin-left: 5px; background: #f0f0f0; font-size: 12px; }
.sets, .props, .desc { font: 11px/17px "DejaVu Sans Condensed", "DejaVu Sans", sans-serif; border: 1px solid #000; margin-left: 3px; }
.sets { width: calc(100% - 3px); height: 88px; border-collapse: separate; background: #fff; }
.sets th { height: 30px; padding-left: 6px; background: #bbdcf3; border: 1px solid #fff; }
.sets td { height: 21px; padding-left: 2px; background: #0078d7; color: #fff; }
.sets .rest td { height: auto; background: #fff; }
.props { display: flex; height: 163px; margin-top: 4px; overflow: hidden; white-space: nowrap; background: #f0f0f0; }
.props table { flex: 1; table-layout: fixed; width: 100px; height: 170px; }
.props td, .props th { height: 17px; line-height: 16px; }
.c-fold { width: 21px; }
.c-prop { width: 157px; }
.props .cat th { font-weight: 700; padding-left: 4px; }
.props .cat th:first-child { padding-left: 5px; }
.props td { padding-left: 3px; background: #fff; border-bottom: 1px solid #f0f0f0; }
.props td:nth-child(2) { border-right: 1px solid #f0f0f0; }
.props .sel td:nth-child(2) { background: #f0f0f0; }
.props .scroll { width: 16px; }
.mini { width: 15px; height: 42px; }
.desc { height: 59px; margin-top: 3px; margin-bottom: 5px; padding: 1px 4px; line-height: 16px; }
.rows { padding: 0 4px 0 7px; }
.row { display: flex; align-items: center; height: 30px; white-space: nowrap; }
.push { margin-left: auto; }
.place { padding: 0 3px 5px 7px; }
.place, .auto { height: 65px; }
.auto { height: 98px; padding-top: 4px; padding-right: 5px; }
.endonly { padding-right: 6px; }
.row label { display: flex; align-items: center; gap: 5px; font-size: 11px; }
.row .lbl { font-size: 12px; }
.row .doauto { width: 108px; }
.btn { width: 69px; height: 25px; border: 1px solid #dadada; }
.btn.primary { background: #4169e1; border-color: #4169e1; color: #fff; }
.btn.w61 { width: 61px; }
.btn.w58 { width: 58px; margin-left: 6px; }
.btn.w48 { width: 48px; margin-left: 3px; }
input { appearance: none; flex: none; width: 13px; height: 13px; margin: 0; background: #fff; border: 1px solid #333; }
input[type=radio] { border-radius: 50%; }
input[type=radio]:checked { background: radial-gradient(#333 0 3px, #fff 4px); }
input[type=checkbox]:checked { background: #fff url("data:image/svg+xml,%3Csvg xmlns='http://www.w3.org/2000/svg' viewBox='0 0 11 11'%3E%3Cpath d='M2 5l3 3 4-6' fill='none' stroke='%23333' stroke-width='1.500'/%3E%3C/svg%3E"); }
.draw { height: 130px; }
.r24 { height: 24px; }
.r28 { height: 28px; }
.r16 { height: 18px; }
.radios { display: flex; gap: 12px; }
.radios.wide { gap: 22px; }
.draw .radios { padding-right: 6px; }
.draw .radios.wide { padding-right: 3px; }
select { appearance: none; height: 21px; margin: 0; padding: 0 3px; border: 1px solid #a5a5a5; border-radius: 0; background: #e1e1e1 url("data:image/svg+xml,%3Csvg xmlns='http://www.w3.org/2000/svg' viewBox='0 0 10 6'%3E%3Cpath d='M1 1l4 4 4-4' fill='none' stroke='%23505050'/%3E%3C/svg%3E") no-repeat right 4px center / 10px 6px; color: #000; font: 11px "DejaVu Sans Condensed", sans-serif; }
.sel192 { width: 192px; }
.sel166 { width: 166px; margin-left: 8px; }
.vals2 { margin-left: 13px; }
.spin { display: flex; flex-direction: column; justify-content: space-around; align-items: center; width: 16px; height: 20px; margin-left: 1px; background: #f8f8f8; }
.sup, .sdn { width: 7px; height: 4px; background: #3f5f8f; clip-path: polygon(0 100%, 100% 100%, 50% 0); }
.sdn { clip-path: polygon(0 0, 100% 0, 50% 100%); }
.out { padding-top: 4px; }
.long { height: 857px; width: 15px; }

.status { display: flex; align-items: center; flex: none; height: 22px; padding-left: 14px; border-top: 1px solid #d0d0d0; white-space: nowrap; }
.full { width: 208px; }
.progress { width: 192px; height: 16px; background: #06b025; border: 1px solid #bcbcbc; }
.print { display: flex; align-items: center; gap: 4px; margin: 0 13px 0 3px; }
.pdf { width: 126px; }
```
